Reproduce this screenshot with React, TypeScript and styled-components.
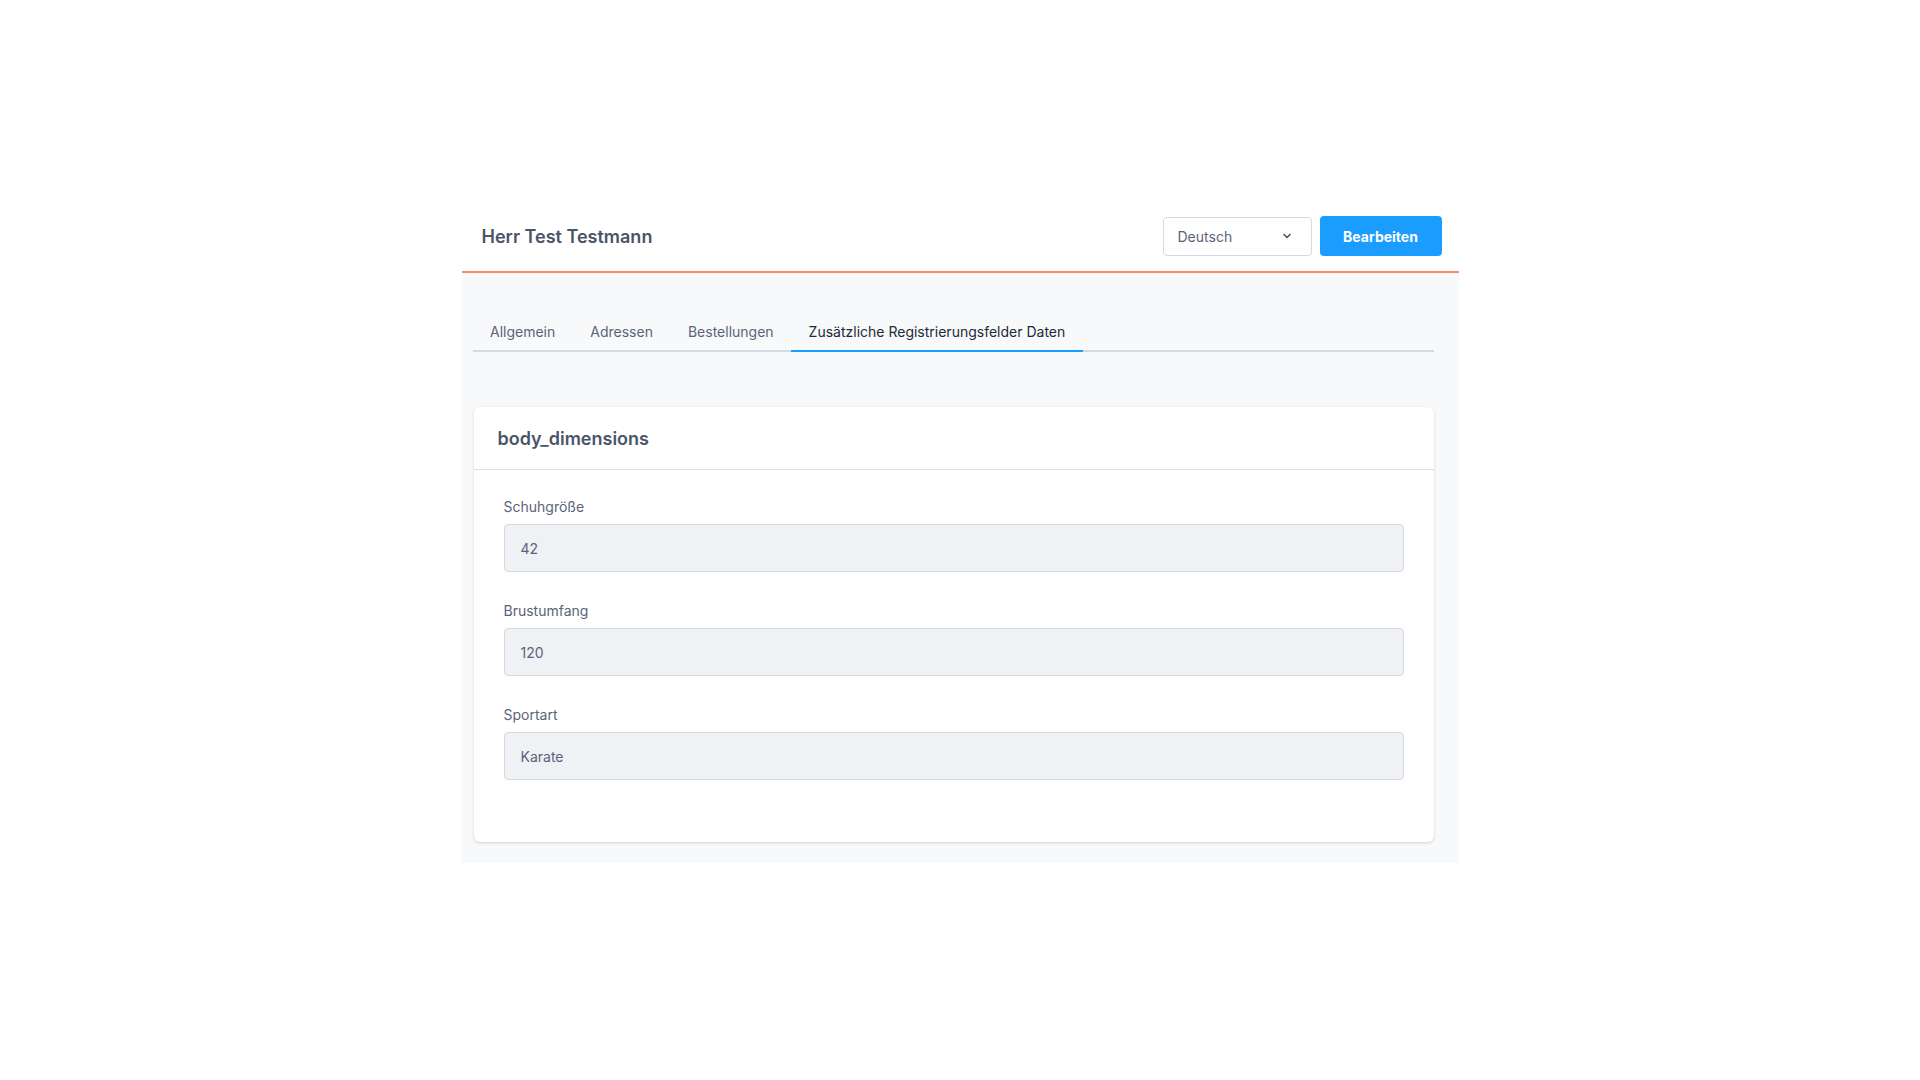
import React from 'react';
import styled, { createGlobalStyle } from 'styled-components';

const GlobalStyle = createGlobalStyle`
	body {
		margin: 0;
		background: #ffffff;
		font-family: Inter, 'Noto Sans', sans-serif;
	}
`;

const fields = [
	{ label: 'Schuhgröße', value: '42' },
	{ label: 'Brustumfang', value: '120' },
	{ label: 'Sportart', value: 'Karate' },
];

const tabs = ['Allgemein', 'Adressen', 'Bestellungen', 'Zusätzliche Registrierungsfelder Daten'];

const ChevronIcon = () => (
	<svg width='10' height='10' viewBox='0 0 10 10' fill='none'>
		<path d='M2 3.5 L5 6.5 L8 3.5' stroke='#4a5568' strokeWidth='1.6' strokeLinecap='round' strokeLinejoin='round' />
	</svg>
);

const App = () => {
	return (
		<Page>
			<GlobalStyle />
			<Panel>
				<Header>
					<Name>Herr Test Testmann</Name>
					<Actions>
						<Select>
							<span>Deutsch</span>
							<ChevronIcon />
						</Select>
						<EditButton>Bearbeiten</EditButton>
					</Actions>
				</Header>
				<Body>
					<TabList>
						{tabs.map((t, i) => (
							<Tab key={t} active={i === tabs.length - 1}>
								{t}
							</Tab>
						))}
					</TabList>
					<Card>
						<CardHeader>body_dimensions</CardHeader>
						<CardBody>
							{fields.map((f) => (
								<Field key={f.label}>
									<Label>{f.label}</Label>
									<Input>{f.value}</Input>
								</Field>
							))}
						</CardBody>
					</Card>
				</Body>
			</Panel>
		</Page>
	);
};

const Page = styled.div`
	padding-top: 197px;
	min-height: 100vh;
	box-sizing: border-box;
`;

const Panel = styled.div`
	width: 997px;
	margin: 0 auto;
`;

const Header = styled.div`
	display: flex;
	align-items: center;
	justify-content: space-between;
	height: 76px;
	padding: 4px 17px 0 20px;
	box-sizing: border-box;
	border-bottom: 2px solid #f98a62;
`;

const Name = styled.div`
	font-size: 18px;
	font-weight: 600;
	color: #4a5568;
`;

const Actions = styled.div`
	display: flex;
	align-items: center;
	gap: 8px;
`;

const Select = styled.div`
	display: flex;
	align-items: center;
	justify-content: space-between;
	width: 149px;
	height: 39px;
	box-sizing: border-box;
	padding: 0 19px 0 14px;
	border: 1px solid #d5dae0;
	border-radius: 4px;
	background: #ffffff;
	font-size: 14px;
	color: #5a6478;
`;

const EditButton = styled.div`
	display: flex;
	align-items: center;
	justify-content: center;
	width: 122px;
	height: 40px;
	border-radius: 4px;
	background: #1a9dff;
	color: #ffffff;
	font-size: 14px;
	font-weight: 700;
`;

const Body = styled.div`
	background: #f8f9fa;
	padding: 42px 25px 21px 11px;
`;

const TabList = styled.div`
	display: flex;
	border-bottom: 2px solid #d5dae0;
`;

const Tab = styled.div<{ active?: boolean }>`
	padding: 8px 17.5px 10px;
	margin-bottom: -2px;
	font-size: 14px;
	color: ${(p) => (p.active ? '#1f2937' : '#5a6478')};
	border-bottom: 2px solid ${(p) => (p.active ? '#1a9dff' : 'transparent')};
`;

const Card = styled.div`
	margin-top: 55px;
	margin-left: 1px;
	background: #ffffff;
	border-radius: 6px;
	box-shadow: 0 1px 3px rgba(0, 0, 0, 0.16);
`;

const CardHeader = styled.div`
	display: flex;
	align-items: center;
	height: 62px;
	padding: 0 24px;
	border-bottom: 1px solid #dde1e6;
	font-size: 18px;
	font-weight: 600;
	color: #4a5568;
`;

const CardBody = styled.div`
	display: flex;
	flex-direction: column;
	gap: 30px;
	padding: 28px 30px 62px;
`;

const Field = styled.div`
	display: flex;
	flex-direction: column;
	gap: 9px;
`;

const Label = styled.div`
	font-size: 14px;
	color: #5a6478;
`;

const Input = styled.div`
	display: flex;
	align-items: center;
	height: 48px;
	box-sizing: border-box;
	padding: 0 16px;
	border: 1px solid #d5dae0;
	border-radius: 4px;
	background: #eff1f5;
	font-size: 14px;
	color: #5a6478;
`;

export default App;
